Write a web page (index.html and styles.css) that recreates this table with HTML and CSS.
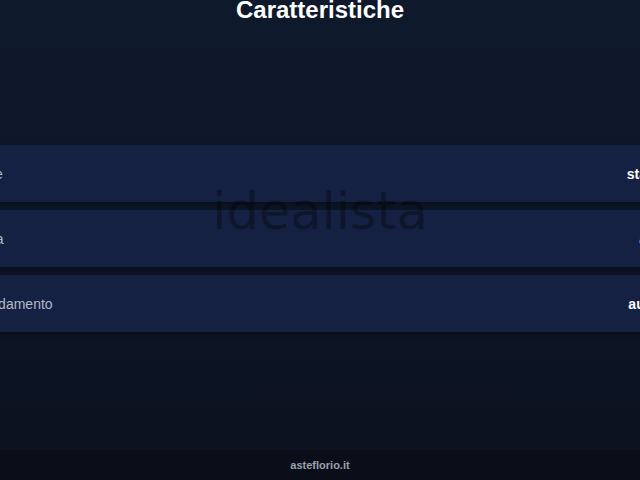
FILE: index.html
```html
<!DOCTYPE html>
<html lang="it">
<head>
<meta charset="utf-8">
<title>Caratteristiche</title>
<link rel="stylesheet" href="styles.css">
</head>
<body>
<div class="page">
  <h1 class="title">Caratteristiche</h1>
  <main class="list">
    <div class="row"><span class="label">Classe</span><span class="value">stagionale</span></div>
    <div class="row"><span class="label">Cucina</span><span class="value">abitabile</span></div>
    <div class="row"><span class="label">Riscaldamento</span><span class="value">autonomo</span></div>
  </main>
  <footer class="footer">asteflorio.it</footer>
  <div class="watermark">idealista</div>
</div>
</body>
</html>
```

FILE: styles.css
```css
html, body {
  margin: 0;
  padding: 0;
  width: 640px;
  height: 480px;
  overflow: hidden;
}
body {
  background: linear-gradient(180deg, #0f192c 0%, #0e1729 40%, #0c1220 90%);
  font-family: "Liberation Sans", Arial, sans-serif;
}
.page {
  position: relative;
  height: 480px;
  display: flex;
  flex-direction: column;
}
.title {
  margin: 0;
  font-size: 24px;
  line-height: 20px;
  font-weight: 700;
  color: #ffffff;
  text-align: center;
}
.list {
  margin: 125px -80px 0 -60px;
  display: flex;
  flex-direction: column;
  gap: 8px;
}
.row {
  height: 57px;
  display: flex;
  align-items: center;
  justify-content: space-between;
  padding: 0 24px 0 20px;
  background: #152142;
  box-shadow: 0 3px 5px rgba(0, 0, 0, 0.35);
  font-size: 14px;
}
.label {
  color: #b2b9c8;
}
.value {
  color: #ffffff;
  font-weight: 700;
}
.footer {
  margin-top: auto;
  height: 30px;
  display: flex;
  align-items: center;
  justify-content: center;
  background: #0a0e18;
  color: #9aa0ac;
  font-size: 11px;
  font-weight: 700;
}
.watermark {
  position: absolute;
  left: 50%;
  top: 186px;
  transform: translateX(-50%);
  font-family: "DejaVu Sans", sans-serif;
  font-size: 51px;
  line-height: 51px;
  color: rgba(0, 0, 0, 0.32);
  white-space: nowrap;
  pointer-events: none;
}
```
